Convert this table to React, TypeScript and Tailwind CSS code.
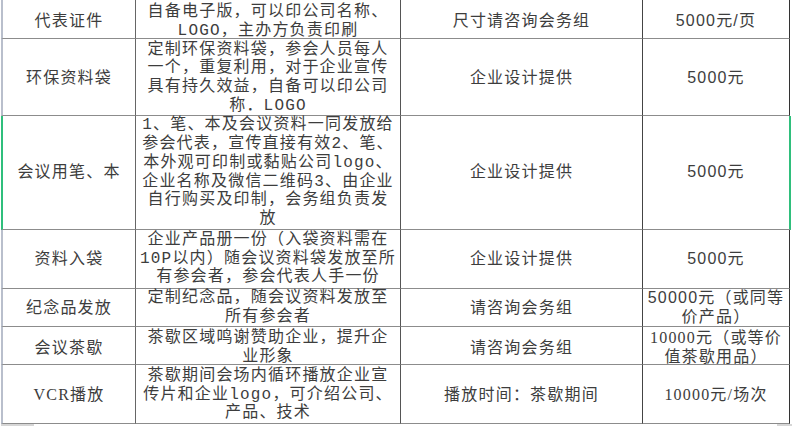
import React from "react";

type Row = {
  h: string;
  pad: string;
  c1: string;
  c2: string[];
  c3: string;
  c4: string[];
  c4sans: boolean;
  green?: boolean;
};

const rows: Row[] = [
  {
    h: "h-[39px]",
    pad: "pt-[5px]",
    c1: "代表证件",
    c2: ["自备电子版，可以印公司名称、", "LOGO，主办方负责印刷"],
    c3: "尺寸请咨询会务组",
    c4: ["5000元/页"],
    c4sans: true,
  },
  {
    h: "h-[77px]",
    pad: "pt-[2px]",
    c1: "环保资料袋",
    c2: [
      "定制环保资料袋，参会人员每人",
      "一个，重复利用，对于企业宣传",
      "具有持久效益，自备可以印公司",
      "称．LOGO",
    ],
    c3: "企业设计提供",
    c4: ["5000元"],
    c4sans: true,
  },
  {
    h: "h-[114px]",
    pad: "pt-[0px]",
    c1: "会议用笔、本",
    c2: [
      "1、笔、本及会议资料一同发放给",
      "参会代表，宣传直接有效2、笔、",
      "本外观可印制或黏贴公司logo、",
      "企业名称及微信二维码3、由企业",
      "自行购买及印制，会务组负责发",
      "放",
    ],
    c3: "企业设计提供",
    c4: ["5000元"],
    c4sans: true,
    green: true,
  },
  {
    h: "h-[59px]",
    pad: "pt-[0px]",
    c1: "资料入袋",
    c2: [
      "企业产品册一份（入袋资料需在",
      "10P以内）随会议资料袋发放至所",
      "有参会者，参会代表人手一份",
    ],
    c3: "企业设计提供",
    c4: ["5000元"],
    c4sans: true,
  },
  {
    h: "h-[38px]",
    pad: "pt-[1px]",
    c1: "纪念品发放",
    c2: ["定制纪念品，随会议资料发放至", "所有参会者"],
    c3: "请咨询会务组",
    c4: ["50000元（或同等", "价产品）"],
    c4sans: true,
  },
  {
    h: "h-[38px]",
    pad: "pt-[5px]",
    c1: "会议茶歇",
    c2: ["茶歇区域鸣谢赞助企业，提升企", "业形象"],
    c3: "请咨询会务组",
    c4: ["10000元（或等价", "值茶歇用品）"],
    c4sans: false,
  },
  {
    h: "h-[59px]",
    pad: "pt-[2px]",
    c1: "VCR播放",
    c2: [
      "茶歇期间会场内循环播放企业宣",
      "传片和企业logo，可介绍公司、",
      "产品、技术",
    ],
    c3: "播放时间：茶歇期间",
    c4: ["10000元/场次"],
    c4sans: false,
  },
];

const serif = "font-['Liberation_Serif','Noto_Sans_CJK_SC',serif]";
const mono = "font-['Liberation_Mono','Noto_Sans_CJK_SC',monospace]";
const sans = "font-['Liberation_Sans','Noto_Sans_CJK_SC',sans-serif]";

function Lines({ lines }: { lines: string[] }) {
  return (
    <div className="flex flex-col items-center">
      {lines.map((l, i) => (
        <div key={i} className="whitespace-nowrap">
          {l}
        </div>
      ))}
    </div>
  );
}

export default function App() {
  return (
    <div className="w-[792px] h-[426px] bg-white overflow-hidden text-[#3d3d3d] text-[16px] leading-[18.7px] tracking-[1.2px]">
      <div className="pl-[1px] flex flex-col">
        {rows.map((r, i) => (
          <div key={i} className={`flex ${r.h}`}>
            <div
              className={`w-[135px] flex items-center justify-center text-center border-l-2 border-r border-b border-r-[#666] border-b-[#8c8c8c] ${
                r.green ? "border-l-[#2fbf7c]" : "border-l-[#b9bfcc]"
              } ${r.pad} ${serif}`}
            >
              <div className="whitespace-nowrap">{r.c1}</div>
            </div>
            <div
              className={`w-[265px] flex items-center justify-center text-center border-r border-b border-r-[#555] border-b-[#8c8c8c] ${r.pad} ${mono}`}
            >
              <Lines lines={r.c2} />
            </div>
            <div
              className={`w-[242px] flex items-center justify-center text-center border-r border-b border-r-[#444] border-b-[#8c8c8c] ${r.pad} ${serif}`}
            >
              <div className="whitespace-nowrap">{r.c3}</div>
            </div>
            <div
              className={`flex items-center justify-center text-center border-b border-b-[#8c8c8c] ${
                r.green
                  ? "w-[148px] border-r-2 border-r-[#2fbf7c]"
                  : "w-[147px] border-r border-r-[#333]"
              } ${r.pad} ${r.c4sans ? sans : serif}`}
            >
              <Lines lines={r.c4} />
            </div>
          </div>
        ))}
        <div className="flex justify-between h-[3px] w-[791px]">
          <div className="w-[33px] h-full bg-[#d6d6d6]" />
          <div className="w-[15px] h-full bg-[#d6d6d6]" />
        </div>
      </div>
    </div>
  );
}
